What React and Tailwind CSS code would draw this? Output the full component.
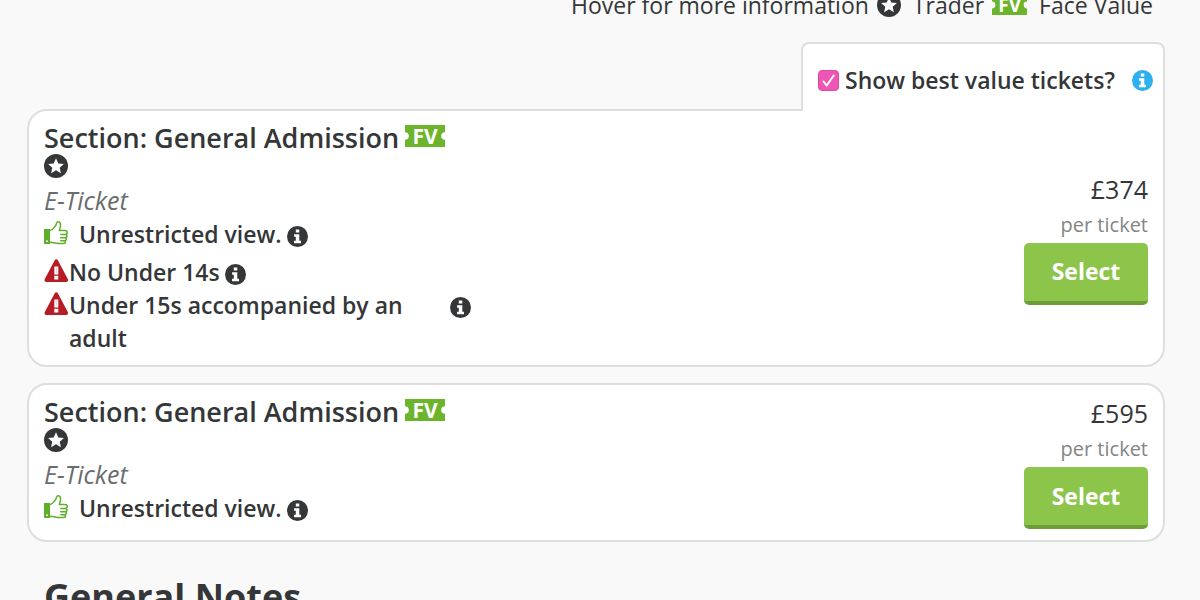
import React from "react";

function StarIcon() {
  return (
    <svg viewBox="0 0 24 24" className="size-6 shrink-0" role="img" aria-label="Trader">
      <circle cx="12" cy="12" r="12" fill="#343638" />
      <path
        d="M12 4.300l2.300 5.200 5.600.5-4.200 3.700 1.200 5.500-4.900-2.900-4.900 2.900 1.200-5.500-4.200-3.700 5.600-.5z"
        fill="#fff"
      />
    </svg>
  );
}

function TicketBadge({ className }) {
  return (
    <span className={`relative inline-flex shrink-0 items-center justify-center ${className}`}>
      <svg viewBox="0 0 40 22" preserveAspectRatio="none" className="absolute inset-0 size-full" aria-hidden="true">
        <path d="M0 0H40V7.200A3.800 3.800 0 0 0 40 14.800V22H0V14.800A3.800 3.800 0 0 0 0 7.200Z" fill="#6cb42c" />
      </svg>
      <span className="relative font-['Open_Sans',sans-serif] font-bold text-white">FV</span>
    </span>
  );
}

function InfoIcon({ className }) {
  return (
    <svg viewBox="0 0 21 21" className={`size-[21px] shrink-0 ${className}`} aria-hidden="true">
      <circle cx="10.500" cy="10.500" r="10.500" fill="currentColor" />
      <path d="M8.800 3.500h3.500v3.100H8.800zM7.100 8.200h5.200v6.500h1.700v2.500H7.100v-2.500h1.700v-4H7.100z" fill="#fff" />
    </svg>
  );
}

function InfoButton({ label, className, tone }) {
  return (
    <button type="button" aria-label={label} className={`shrink-0 ${className}`}>
      <InfoIcon className={tone} />
    </button>
  );
}

function ThumbIcon() {
  return (
    <svg viewBox="0 0 24 24" className="size-6 shrink-0" aria-hidden="true">
      <path d="M0 8h6v15H0z" fill="#5fae2a" />
      <circle cx="3" cy="20.200" r="0.900" fill="#fff" />
      <path
        d="M6 9.400c1.500-.2 2.600-1 3.600-2.300 1.400-1.800 2.400-2.300 2.700-4.300.2-1.300.6-2 1.700-2 1.900 0 2.800 1.500 2.500 3.900-.1 1.600-.8 2.900-1.100 4.900h5.600c1.300 0 2.200.8 2.200 1.900s-.8 1.900-1.900 1.900h-4.500M21.300 13.400c1 .1 1.700.8 1.700 1.600 0 1-.7 1.700-1.900 1.700h-4.500M21 16.700c.9.100 1.400.7 1.400 1.400 0 .9-.7 1.600-1.700 1.600h-3.900M20.600 19.700c.6.200.9.600.9 1.200 0 .9-.8 1.500-1.900 1.500h-5.500c-3 0-5-1.200-8.100-1.200"
        fill="none"
        stroke="#5fae2a"
        strokeWidth="1.500"
        strokeLinecap="round"
        strokeLinejoin="round"
      />
    </svg>
  );
}

function WarningIcon() {
  return (
    <svg viewBox="0 0 25 24" className="h-6 w-[25px] shrink-0" aria-hidden="true">
      <path
        d="M10.700 1.300a1.800 1.800 0 0 1 3.200 0l10 19c.7 1.300-.2 2.700-1.600 2.700H2.300C.9 23 0 21.600.7 20.300z"
        fill="#b71c24"
      />
      <path d="M10.300 7.600h4v7.800h-4zM10.300 16.700h4v3.700h-4z" fill="#fff" />
      <path d="M11.600 8.600h1.400l-.2 5.400h-1z" fill="#b71c24" opacity="0.200" />
    </svg>
  );
}

const listings = [
  {
    id: 1,
    price: "£374",
    warnings: ["No Under 14s", "Under 15s accompanied by an adult"],
  },
  { id: 2, price: "£595", warnings: [] },
];

function Listing({ price, warnings, className }) {
  return (
    <article
      className={`flex items-center justify-between border-2 border-[#dedede] bg-white px-[15px] pt-[11px] pb-[10px] ${className}`}
    >
      <div className="self-start">
        <h3 className="flex h-8 items-center text-[27px] leading-[30px] font-semibold">
          Section: General Admission
          <TicketBadge className="mb-1 ml-[6px] h-[22px] w-10 text-[21px] leading-[22px]" />
        </h3>
        <StarIcon />
        <p className="mt-[6px] mb-px text-[25px] leading-[33px] text-[#6a6c6e] italic">E-Ticket</p>
        <div className="mb-[5px] flex items-start text-[23px] leading-[33px] font-semibold">
          <span className="flex h-[30px] items-center">
            <ThumbIcon />
          </span>
          <span className="ml-[11px]">Unrestricted view.</span>
          <InfoButton label="About this view" className="mt-2 ml-[5px]" tone="text-[#343638]" />
        </div>
        {warnings.map((text) => (
          <div key={text} className="flex items-start text-[23px] leading-[33px] font-semibold">
            <span className="flex h-[30px] items-center">
              <WarningIcon />
            </span>
            <span className="max-w-[376px]">{text}</span>
            <InfoButton label={`About: ${text}`} className="mt-2 ml-[5px]" tone="text-[#343638]" />
          </div>
        ))}
      </div>
      <div className="flex flex-col items-end">
        <p className="text-[25px] leading-8">{price}</p>
        <p className="mt-[2px] text-[20px] leading-9 text-[#858585]">per ticket</p>
        <button
          type="button"
          className="h-[62px] w-[124px] rounded-[5px] border-b-4 border-[#6f9c36] bg-[#8dc54b] text-[23px] font-bold text-white"
        >
          Select
        </button>
      </div>
    </article>
  );
}

export default function App() {
  return (
    <div className="h-screen overflow-hidden bg-[#f9f9f9] font-['Open_Sans','Noto_Sans',sans-serif] text-[#343638]">
      <main className="-mt-3 mr-[35px] ml-[27px]">
        <div className="mr-3 flex h-[34px] items-center justify-end text-[23px]">
          <span>Hover for more information</span>
          <span className="ml-2 flex">
            <StarIcon />
          </span>
          <span className="ml-3">Trader</span>
          <TicketBadge className="ml-2 h-5 w-[35px] text-[19px] leading-5" />
          <span className="ml-3">Face Value</span>
        </div>

        <div className="relative mt-5 -mb-[2px] ml-auto flex h-[69px] w-[364px] items-center rounded-t-lg border-2 border-b-0 border-[#dedede] bg-white pt-[6px] pr-[10px] pl-[15px]">
          <label className="flex items-center text-[23px] font-semibold">
            <span className="relative mr-[6px] flex size-[21px]">
              <input
                type="checkbox"
                defaultChecked
                className="peer size-[21px] appearance-none rounded-[4px] border border-[#dd4aa6] bg-white checked:bg-[#ee56b5]"
              />
              <svg
                viewBox="0 0 21 21"
                className="pointer-events-none absolute inset-0 hidden size-[21px] peer-checked:block"
                aria-hidden="true"
              >
                <path
                  d="M5.500 11.500l3.200 4L15.700 5.500"
                  fill="none"
                  stroke="#fff"
                  strokeWidth="2"
                  strokeLinecap="round"
                  strokeLinejoin="round"
                />
              </svg>
            </span>
            Show best value tickets?
          </label>
          <InfoButton label="About best value tickets" className="ml-auto" tone="text-[#2cb0ee]" />
        </div>

        <section className="flex flex-col gap-4">
          {listings.map((item, i) => (
            <Listing
              key={item.id}
              price={item.price}
              warnings={item.warnings}
              className={i === 0 ? "rounded-[20px] rounded-tr-none" : "rounded-[20px]"}
            />
          ))}
        </section>

        <h2 className="mt-7 ml-[17px] text-[36px] leading-[54px] font-bold">General Notes</h2>
      </main>
    </div>
  );
}
